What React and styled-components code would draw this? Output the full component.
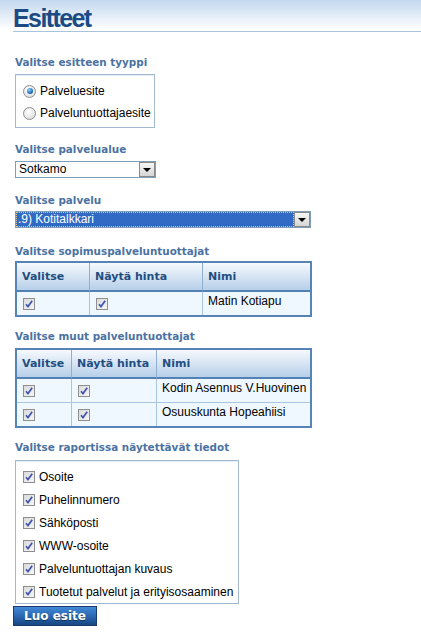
import React from 'react';
import styled, { createGlobalStyle } from 'styled-components';

const GlobalStyle = createGlobalStyle`
  * { box-sizing: border-box; }
  body {
    margin: 0;
    background: #fff;
    font-family: "Liberation Sans", Arial, sans-serif;
    font-size: 12px;
    color: #000;
  }
`;

const HeaderBar = styled.div`
  height: 32px;
  padding-top: 5px;
  background: linear-gradient(#c3d8ef, #ffffff 92%);
`;

const Title = styled.h1`
  margin: 0 0 0 13px;
  height: 27px;
  font-family: "Liberation Sans", Arial, sans-serif;
  font-size: 25px;
  line-height: 26px;
  font-weight: bold;
  letter-spacing: -1.6px;
  color: #1c4b84;
  border-bottom: 1px solid #a9c4da;
`;

const Content = styled.div`
  padding-left: 15px;
`;

const Label = styled.div`
  margin-top: ${p => p.$top}px;
  margin-bottom: ${p => p.$bottom ?? 5}px;
  font-family: "DejaVu Sans", Verdana, sans-serif;
  font-size: 10.4px;
  line-height: 13px;
  font-weight: bold;
  color: #4b72a2;
`;

const OptionBox = styled.div`
  width: ${p => p.$width}px;
  padding: ${p => p.$pad};
  border: 1px solid #a3b9d0;
  box-shadow: inset 0 1px 0 #e3ebf3;
  background: #fff;
`;

const OptionRow = styled.div`
  display: flex;
  align-items: center;
  gap: 4px;
  height: ${p => p.$h}px;
  font-size: 12px;
`;

const RadioDot = styled.span`
  width: 13px;
  height: 13px;
  border-radius: 50%;
  border: 1px solid #8d8d8d;
  background: radial-gradient(circle at 40% 35%, #ffffff, #d6d6d6);
  display: flex;
  align-items: center;
  justify-content: center;
  flex: none;

  &::after {
    content: '';
    display: ${p => (p.$on ? 'block' : 'none')};
    width: 6px;
    height: 6px;
    border-radius: 50%;
    background: radial-gradient(circle at 35% 30%, #8fd0ff, #0d5aa8 75%);
  }
`;

const CheckBox = () => (
  <svg width="12" height="12" viewBox="0 0 12 12" style={{ flex: 'none' }}>
    <defs>
      <linearGradient id="cbg" x1="0" y1="0" x2="1" y2="1">
        <stop offset="0" stopColor="#d9d9d9" />
        <stop offset="1" stopColor="#f7f7f7" />
      </linearGradient>
    </defs>
    <rect x="0.5" y="0.5" width="11" height="11" fill="url(#cbg)" stroke="#8e8e8e" />
    <path d="M3 6.2 L5 8.6 L9.2 2.8" fill="none" stroke="#3f55ad" strokeWidth="1.7" />
  </svg>
);

const SelectBox = styled.div`
  display: flex;
  width: ${p => p.$width}px;
  height: 17px;
  border: 1px solid #7f9db9;
  background: #fff;
`;

const SelectValue = styled.div`
  flex: 1;
  padding-left: ${p => (p.$active ? 2 : 3)}px;
  font-size: 12px;
  line-height: 15px;
  color: ${p => (p.$active ? '#fff' : '#000')};
  background: ${p => (p.$active ? '#316ac5' : 'transparent')};
  outline: ${p => (p.$active ? '1px dotted #e8c870' : 'none')};
  outline-offset: -1px;
  white-space: nowrap;
`;

const SelectArrow = styled.div`
  width: 16px;
  height: 15px;
  border: 1px solid #8a8a8a;
  background: linear-gradient(#f6f6f6, #d6d6d6);
  display: flex;
  align-items: center;
  justify-content: center;

  &::after {
    content: '';
    border-left: 4px solid transparent;
    border-right: 4px solid transparent;
    border-top: 4px solid #000;
  }
`;

const Table = styled.table`
  width: 297px;
  table-layout: fixed;
  border-collapse: separate;
  border-spacing: 0;
  border: 2px solid #5684b6;
`;

const Th = styled.th`
  width: ${p => (p.$w ? `${p.$w}px` : 'auto')};
  height: 29px;
  padding: 0 5px;
  text-align: left;
  font-family: "DejaVu Sans", Verdana, sans-serif;
  font-size: 11px;
  font-weight: bold;
  color: #1f4e82;
  background: linear-gradient(#f6f9fd, #b7cfe9);
  border-bottom: 2px solid #5281b5;
  border-right: 1px solid #8eafd2;

  &:last-child { border-right: none; }
`;

const Td = styled.td`
  height: 24px;
  padding: ${p => (p.$text ? '2px 5px 0' : '0 6px')};
  vertical-align: ${p => (p.$text ? 'top' : 'middle')};
  font-size: 12px;
  line-height: 14px;
  white-space: nowrap;
  background: #f0f8ff;
  border-right: 1px solid #a9c5e0;
  border-bottom: 1px solid #a9c5e0;

  &:last-child { border-right: none; }
  tr:last-child > & { border-bottom: none; height: 23px; }

  svg { display: block; }
`;

const Button = styled.button`
  display: block;
  margin: 2px 0 0 -2px;
  width: 84px;
  height: 20px;
  padding: 0;
  border: 1px solid #1b3c69;
  background: linear-gradient(#4289d8, #2a64ae 55%, #174682);
  color: #fff;
  font-family: "DejaVu Sans", Verdana, sans-serif;
  font-size: 12px;
  font-weight: bold;
  text-shadow: 0 1px 0 #123256;
  cursor: pointer;
`;

const ProviderTable = ({ widths, rows }) => (
  <Table>
    <thead>
      <tr>
        <Th $w={widths[0]}>Valitse</Th>
        <Th $w={widths[1]}>Näytä hinta</Th>
        <Th>Nimi</Th>
      </tr>
    </thead>
    <tbody>
      {rows.map(name => (
        <tr key={name}>
          <Td><CheckBox /></Td>
          <Td><CheckBox /></Td>
          <Td $text>{name}</Td>
        </tr>
      ))}
    </tbody>
  </Table>
);

const reportFields = [
  'Osoite',
  'Puhelinnumero',
  'Sähköposti',
  'WWW-osoite',
  'Palveluntuottajan kuvaus',
  'Tuotetut palvelut ja erityisosaaminen',
];

const App = () => (
  <>
    <GlobalStyle />
    <HeaderBar>
      <Title>Esitteet</Title>
    </HeaderBar>
    <Content>
      <Label $top={24}>Valitse esitteen tyyppi</Label>
      <OptionBox $width={140} $pad="5px 0 3px 7px">
        <OptionRow $h={22}><RadioDot $on /> Palveluesite</OptionRow>
        <OptionRow $h={22}><RadioDot /> Palveluntuottajaesite</OptionRow>
      </OptionBox>

      <Label $top={15}>Valitse palvelualue</Label>
      <SelectBox $width={141}>
        <SelectValue>Sotkamo</SelectValue>
        <SelectArrow />
      </SelectBox>

      <Label $top={16} $bottom={4}>Valitse palvelu</Label>
      <SelectBox $width={296}>
        <SelectValue $active>.9) Kotitalkkari</SelectValue>
        <SelectArrow />
      </SelectBox>

      <Label $top={17} $bottom={3}>Valitse sopimuspalveluntuottajat</Label>
      <ProviderTable widths={[73, 113]} rows={['Matin Kotiapu']} />

      <Label $top={13}>Valitse muut palveluntuottajat</Label>
      <ProviderTable widths={[55, 85]} rows={['Kodin Asennus V.Huovinen', 'Osuuskunta Hopeahiisi']} />

      <Label $top={13} $bottom={6}>Valitse raportissa näytettävät tiedot</Label>
      <OptionBox $width={224} $pad="4px 0 0 7px">
        {reportFields.map(f => (
          <OptionRow key={f} $h={23}><CheckBox /> {f}</OptionRow>
        ))}
      </OptionBox>

      <Button>Luo esite</Button>
    </Content>
  </>
);

export default App;
